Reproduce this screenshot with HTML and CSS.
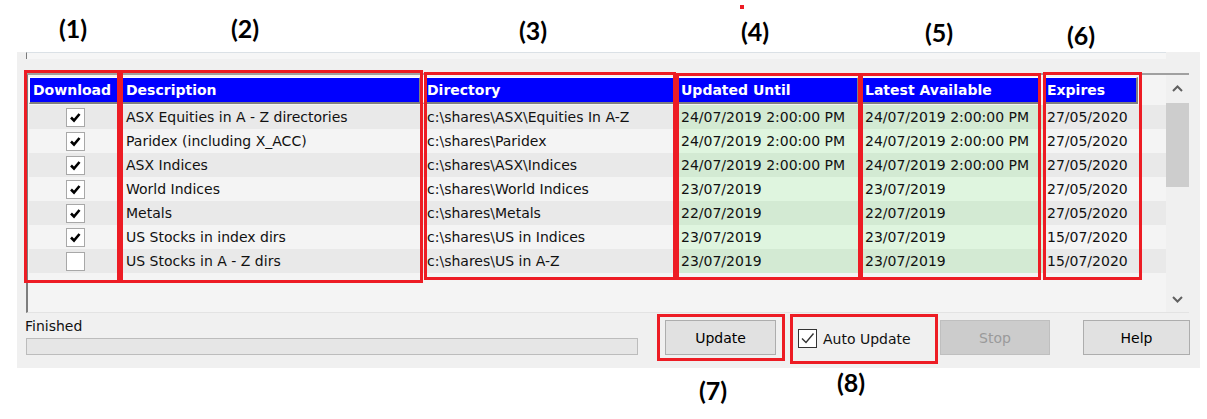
FILE: index.html
```html
<!DOCTYPE html>
<html lang="en">
<head>
    <meta charset="UTF-8">
    <meta name="viewport" content="width=device-width, initial-scale=1.0">
    <title>Data Download</title>
    <link rel="stylesheet" href="styles.css">
</head>
<body>

<div class="shot">
    <div class="window">
        <div class="memo"></div>

        <div class="grid">
            <div class="sheet">
                <div class="row head">
                    <div class="hc">Download</div>
                    <div class="hc">Description</div>
                    <div class="hc">Directory</div>
                    <div class="hc">Updated Until</div>
                    <div class="hc">Latest Available</div>
                    <div class="hc">Expires</div>
                </div>
                <div class="row odd">
                    <div class="c chk"><span class="box on"></span></div>
                    <div class="c">ASX Equities in A - Z directories</div>
                    <div class="c">c:\shares\ASX\Equities In A-Z</div>
                    <div class="c g">24/07/2019 2:00:00 PM</div>
                    <div class="c g">24/07/2019 2:00:00 PM</div>
                    <div class="c">27/05/2020</div>
                </div>
                <div class="row">
                    <div class="c chk"><span class="box on"></span></div>
                    <div class="c">Paridex (including X_ACC)</div>
                    <div class="c">c:\shares\Paridex</div>
                    <div class="c g">24/07/2019 2:00:00 PM</div>
                    <div class="c g">24/07/2019 2:00:00 PM</div>
                    <div class="c">27/05/2020</div>
                </div>
                <div class="row odd">
                    <div class="c chk"><span class="box on"></span></div>
                    <div class="c">ASX Indices</div>
                    <div class="c">c:\shares\ASX\Indices</div>
                    <div class="c g">24/07/2019 2:00:00 PM</div>
                    <div class="c g">24/07/2019 2:00:00 PM</div>
                    <div class="c">27/05/2020</div>
                </div>
                <div class="row">
                    <div class="c chk"><span class="box on"></span></div>
                    <div class="c">World Indices</div>
                    <div class="c">c:\shares\World Indices</div>
                    <div class="c g">23/07/2019</div>
                    <div class="c g">23/07/2019</div>
                    <div class="c">27/05/2020</div>
                </div>
                <div class="row odd">
                    <div class="c chk"><span class="box on"></span></div>
                    <div class="c">Metals</div>
                    <div class="c">c:\shares\Metals</div>
                    <div class="c g">22/07/2019</div>
                    <div class="c g">22/07/2019</div>
                    <div class="c">27/05/2020</div>
                </div>
                <div class="row">
                    <div class="c chk"><span class="box on"></span></div>
                    <div class="c">US Stocks in index dirs</div>
                    <div class="c">c:\shares\US in Indices</div>
                    <div class="c g">23/07/2019</div>
                    <div class="c g">23/07/2019</div>
                    <div class="c">15/07/2020</div>
                </div>
                <div class="row odd">
                    <div class="c chk"><span class="box"></span></div>
                    <div class="c">US Stocks in A - Z dirs</div>
                    <div class="c">c:\shares\US in A-Z</div>
                    <div class="c g">23/07/2019</div>
                    <div class="c g">23/07/2019</div>
                    <div class="c">15/07/2020</div>
                </div>
            </div>

            <div class="vscroll">
                <div class="arrow up">
                    <svg width="11" height="7" viewBox="0 0 11 7"><path d="M1 6 L5.5 1.5 L10 6" fill="none" stroke="#606060" stroke-width="2"/></svg>
                </div>
                <div class="track"><div class="thumb"></div></div>
                <div class="arrow down">
                    <svg width="11" height="7" viewBox="0 0 11 7"><path d="M1 1 L5.5 5.5 L10 1" fill="none" stroke="#606060" stroke-width="2"/></svg>
                </div>
            </div>
        </div>

        <div class="footer">
            <div class="status">
                <div class="msg">Finished</div>
                <div class="progress"></div>
            </div>
            <button class="btn update">Update</button>
            <label class="auto">
                <span class="tick">
                    <svg width="17" height="17" viewBox="0 0 17 17"><path d="M3 8.5 L7 12.5 L14.5 3.5" fill="none" stroke="#333" stroke-width="1.4"/></svg>
                </span>
                Auto Update
            </label>
            <button class="btn stop" disabled>Stop</button>
            <button class="btn help">Help</button>
        </div>
    </div>

    <!-- annotations drawn over the screenshot -->
    <div class="note n1">(1)</div>
    <div class="note n2">(2)</div>
    <div class="note n3">(3)</div>
    <div class="note n4">(4)</div>
    <div class="note n5">(5)</div>
    <div class="note n6">(6)</div>
    <div class="note n7">(7)</div>
    <div class="note n8">(8)</div>
    <div class="dot"></div>

    <div class="mark m1"></div>
    <div class="mark m2"></div>
    <div class="mark m3"></div>
    <div class="mark m4"></div>
    <div class="mark m5"></div>
    <div class="mark m6"></div>
    <div class="mark m7"></div>
    <div class="mark m8"></div>
</div>

</body>
</html>
```

FILE: styles.css
```css
body {
    margin: 0;
    background: #fff;
    font-family: "DejaVu Sans", Verdana, sans-serif;
    font-size: 14px;
    color: #111;
}
.shot {
    position: relative;
    width: 1207px;
    height: 419px;
    padding: 50px 0 0 17px;
    box-sizing: border-box;
}
.window {
    width: 1183px;
    height: 316px;
    background: #f0f0f0;
}
.memo {
    margin: 2px 0 0 9px;
    width: 1139px;
    height: 6px;
    border-top: 1px solid #dbe1e6;
    border-left: 1px solid #7a7a7a;
    background: #f6f6f6;
}

/* grid */
.grid {
    display: flex;
    margin: 14px 0 0 9px;
    width: 1163px;
    height: 240px;
    box-sizing: border-box;
    border-top: 2px solid #a0a0a0;
    border-left: 2px solid #7d7d7d;
    border-bottom: 1px solid #e3e3e3;
    background: #f4f4f4;
}
.sheet {
    flex: 1;
    padding: 2px 0 0 1px;
}
.row {
    display: grid;
    grid-template-columns: 93px 301px 254px 184px 182px 97px;
    background: #f4f4f4;
}
.row.odd {
    background: #e9e9e9;
}
.row.head {
    background: none;
    margin-bottom: 1px;
}
.hc {
    margin-right: 2px;
    height: 24px;
    line-height: 24px;
    padding-left: 3px;
    border-top: 1px solid #fff;
    border-left: 1px solid #fff;
    border-right: 2px solid #808080;
    border-bottom: 2px solid #808080;
    background: #0000ff;
    color: #fff;
    font-weight: bold;
    white-space: nowrap;
    overflow: hidden;
}
.c {
    height: 24px;
    line-height: 24px;
    padding-left: 4px;
    white-space: nowrap;
    overflow: hidden;
}
.c.g {
    background: #dff5df;
}
.odd .c.g {
    background: #d3ead3;
}
.c.chk {
    display: flex;
    align-items: center;
    justify-content: center;
    padding: 0;
}
.box {
    width: 17px;
    height: 17px;
    border: 1px solid #a8a8a8;
    background: #fff;
}
.box.on {
    background: #fff url("data:image/svg+xml,%3Csvg xmlns='http://www.w3.org/2000/svg' width='17' height='17'%3E%3Cpath d='M4 8.5 L7 11.5 L12.5 5' fill='none' stroke='black' stroke-width='2.6'/%3E%3C/svg%3E") no-repeat center;
}

/* scrollbar */
.vscroll {
    width: 23px;
    display: flex;
    flex-direction: column;
    background: #f0f0f0;
}
.arrow {
    display: flex;
    align-items: center;
    justify-content: center;
}
.arrow.up {
    height: 27px;
}
.arrow.down {
    height: 25px;
}
.track {
    flex: 1;
}
.thumb {
    margin-top: 1px;
    height: 84px;
    background: #cdcdcd;
}

/* bottom bar */
.footer {
    display: flex;
    align-items: flex-start;
    height: 53px;
}
.status {
    margin-left: 8px;
    width: 613px;
}
.msg {
    margin-top: 5px;
    line-height: 16px;
}
.progress {
    margin: 4px 0 0 1px;
    height: 17px;
    box-sizing: border-box;
    border: 1px solid #bcbcbc;
    background: #e6e6e6;
}
.btn {
    margin-top: 7px;
    height: 35px;
    font-family: inherit;
    font-size: 14px;
    color: #000;
    background: #e1e1e1;
    border: 1px solid #adadad;
    padding: 0;
}
.btn.update {
    margin-left: 27px;
    width: 111px;
}
.btn.stop {
    width: 110px;
    background: #cccccc;
    border-color: #bfbfbf;
    color: #9a9a9a;
}
.btn.help {
    margin-left: 33px;
    width: 107px;
}
.auto {
    display: flex;
    align-items: center;
    gap: 6px;
    margin: 16px 0 0 22px;
    width: 142px;
    line-height: 18px;
}
.tick {
    display: block;
    width: 17px;
    height: 17px;
    border: 1px solid #333;
    background: #fff;
}
.tick svg {
    display: block;
}

/* annotations */
.note {
    position: absolute;
    font-family: Lato, "Liberation Sans", sans-serif;
    font-weight: bold;
    font-size: 25px;
    line-height: 25px;
    color: #000;
}
.n1 { left: 59px; top: 16px; }
.n2 { left: 231px; top: 16px; }
.n3 { left: 519px; top: 18px; }
.n4 { left: 741px; top: 19px; }
.n5 { left: 925px; top: 20px; }
.n6 { left: 1067px; top: 23px; }
.n7 { left: 699px; top: 378px; }
.n8 { left: 837px; top: 370px; }
.dot {
    position: absolute;
    left: 740px;
    top: 5px;
    width: 4px;
    height: 4px;
    background: #ed1c24;
}
.mark {
    position: absolute;
    border: 3px solid #ed1c24;
    box-sizing: border-box;
}
.m1 { left: 24px; top: 70px; width: 96px; height: 213px; }
.m2 { left: 120px; top: 70px; width: 303px; height: 213px; }
.m3 { left: 424px; top: 72px; width: 252px; height: 208px; }
.m4 { left: 676px; top: 73px; width: 185px; height: 207px; }
.m5 { left: 860px; top: 73px; width: 181px; height: 207px; }
.m6 { left: 1043px; top: 72px; width: 99px; height: 208px; }
.m7 { left: 657px; top: 314px; width: 128px; height: 47px; }
.m8 { left: 790px; top: 314px; width: 148px; height: 50px; }
```
